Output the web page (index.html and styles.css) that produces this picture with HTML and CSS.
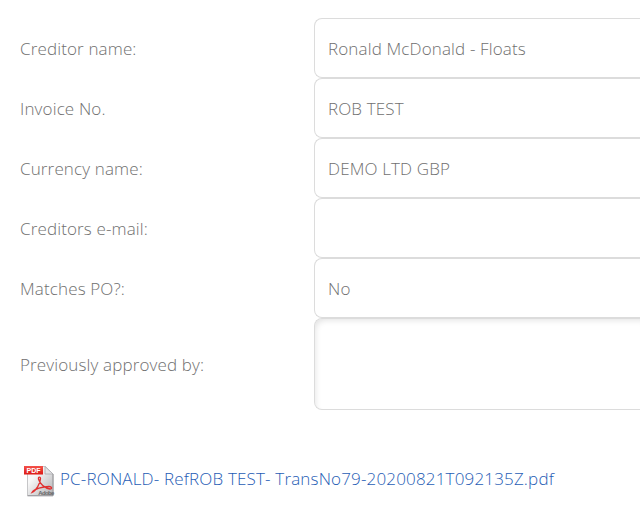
FILE: index.html
```html
<!DOCTYPE html>
<html lang="en">
<head>
    <meta charset="UTF-8">
    <meta name="viewport" content="width=device-width, initial-scale=1.0">
    <title>Invoice details</title>
    <link rel="stylesheet" href="styles.css">
</head>
<body>
    <form class="invoice-form">
        <div class="form-row">
            <label for="creditor">Creditor name:</label>
            <input type="text" id="creditor" value="Ronald McDonald - Floats">
        </div>
        <div class="form-row">
            <label for="invoice">Invoice No.</label>
            <input type="text" id="invoice" value="ROB TEST">
        </div>
        <div class="form-row">
            <label for="currency">Currency name:</label>
            <input type="text" id="currency" value="DEMO LTD GBP">
        </div>
        <div class="form-row">
            <label for="email">Creditors e-mail:</label>
            <input type="text" id="email">
        </div>
        <div class="form-row">
            <label for="matches">Matches PO?:</label>
            <input type="text" id="matches" value="No">
        </div>
        <div class="form-row">
            <label for="approved">Previously approved by:</label>
            <textarea id="approved"></textarea>
        </div>
    </form>

    <div class="attachment">
        <svg class="pdf-icon" width="32" height="32" viewBox="0 0 32 32" aria-hidden="true">
            <defs>
                <linearGradient id="page" x1="0" y1="0" x2="1" y2="1">
                    <stop offset="0.3" stop-color="#f8f8f8"/>
                    <stop offset="1" stop-color="#b0b0b3"/>
                </linearGradient>
                <linearGradient id="banner" x1="0" y1="0" x2="0" y2="1">
                    <stop offset="0" stop-color="#f4524a"/>
                    <stop offset="1" stop-color="#dc1a16"/>
                </linearGradient>
            </defs>
            <path d="M4.500 1.500H22.500L30 9V30.500H4.500Z" fill="url(#page)" stroke="#c6c6c8"/>
            <path d="M30 9V30.800H4.500" fill="none" stroke="#929296"/>
            <path d="M22 1.500V9H30Z" fill="#e4e4e6" stroke="#a9a9ad" stroke-width="0.8"/>
            <rect x="1" y="1" width="19" height="8.500" fill="url(#banner)"/>
            <text class="pdf-label" x="10.500" y="7.800">PDF</text>
            <path d="M9 27.500C13 26 17.500 18 17.500 13.500C17.500 11.500 15 11.500 15.500 14C16.500 18.500 22 23.500 27 24C29.500 24 29 21.500 26 21.500C20 21.500 11 24 9 27.500Z" fill="none" stroke="#e03030" stroke-width="1.300"/>
            <text class="adobe-label" x="23" y="29.500">Adobe</text>
        </svg>
        <a href="#">PC-RONALD- RefROB TEST- TransNo79-20200821T092135Z.pdf</a>
    </div>
</body>
</html>
```

FILE: styles.css
```css
body {
    font-family: 'Open Sans', sans-serif;
    font-size: 17px;
    font-weight: 300;
    line-height: 24px;
    letter-spacing: 0.14px;
    margin: 0;
    padding: 18px 0 0 20px;
    background-color: white;
    color: #707070;
}
.form-row {
    display: flex;
    align-items: center;
}
label {
    width: 294px;
    flex-shrink: 0;
    padding-top: 2px;
}
input,
textarea {
    box-sizing: border-box;
    flex: 1;
    min-width: 0;
    height: 60px;
    margin: 0;
    padding: 12px 13px;
    border: 1px solid #dcdcdc;
    border-right: none;
    border-radius: 8px 0 0 8px;
    background-color: white;
    color: #707070;
    font: inherit;
    letter-spacing: inherit;
}
textarea {
    display: block;
    height: 92px;
    resize: none;
    box-shadow: inset 3px 4px 6px -3px rgba(0, 0, 0, 0.12);
}
.attachment {
    display: flex;
    align-items: center;
    gap: 5px;
    margin-top: 55px;
    padding-left: 3px;
}
.pdf-icon {
    flex-shrink: 0;
}
.pdf-label {
    font: bold 7px 'Liberation Sans', sans-serif;
    letter-spacing: 0;
    fill: white;
    text-anchor: middle;
}
.adobe-label {
    font: bold 6px 'Liberation Sans', sans-serif;
    letter-spacing: -0.6px;
    fill: #66666a;
    text-anchor: middle;
}
.attachment a {
    padding-bottom: 4px;
    color: #1f5db5;
    letter-spacing: 0.17px;
    text-decoration: none;
    white-space: nowrap;
}
```
